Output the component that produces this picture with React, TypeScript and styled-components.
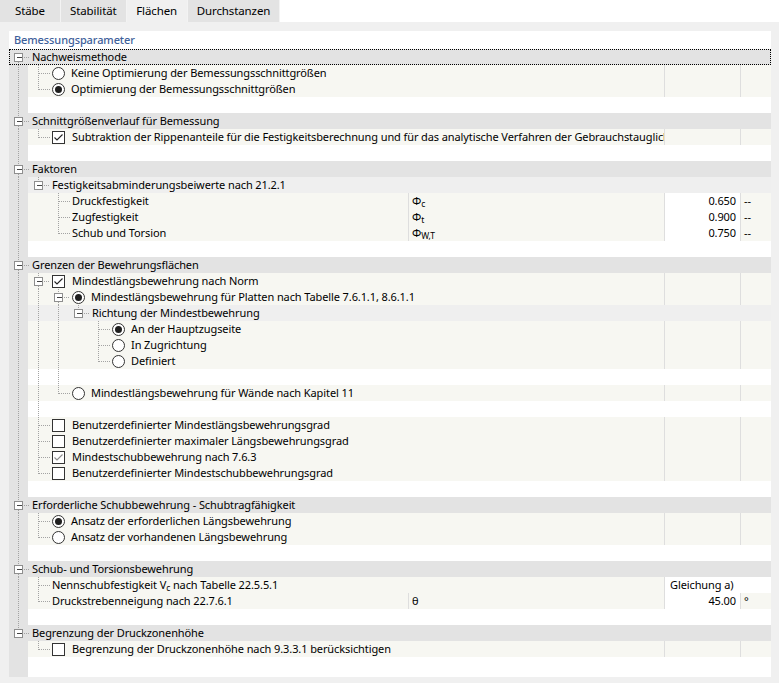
import * as React from 'react';
import styled, { createGlobalStyle } from 'styled-components';

type Kind = 'group' | 'sub' | 'item' | 'blank';

interface RowData {
    kind: Kind;
    level: number;
    label?: React.ReactNode;
    control?: 'radio' | 'check';
    on?: boolean;
    disabled?: boolean;
    pass?: number[];
    leaf?: 'tee' | 'end';
    exp?: { above: boolean; below: boolean };
    symbol?: React.ReactNode;
    value?: string;
    unit?: string;
    wide?: string;
    focused?: boolean;
    tall?: boolean;
}

const RAIL = '#e3e3e3';
const SEP = '#dedede';
const BODY: Record<Kind, string> = {
    group: RAIL,
    sub: '#efefef',
    item: '#f7f7f2',
    blank: '#ffffff',
};

const GlobalStyle = createGlobalStyle`
    html, body {
        margin: 0;
        padding: 0;
        background: #ffffff;
    }
    body {
        font-family: "Noto Sans", "Open Sans", sans-serif;
        font-size: 11px;
        letter-spacing: -0.1px;
        color: #000000;
    }
`;

const Page = styled.div`
    width: 779px;
    height: 683px;
    display: flex;
    flex-direction: column;
    overflow: hidden;
`;

const TabBar = styled.div`
    display: flex;
    align-self: flex-start;
    height: 22px;
    background: #e3e3e3;
`;

const Tab = styled.div<{ $active?: boolean }>`
    min-width: 61px;
    box-sizing: border-box;
    padding: 0 9px;
    line-height: 22px;
    text-align: center;
    font-size: 11.5px;
    color: #000000;
    background: ${({ $active }) => ($active ? '#f0f0f0' : 'transparent')};
    border-right: 1px solid #f3f3f3;
`;

const Panel = styled.div`
    flex: 1;
    background: #f0f0f0;
    padding: 9px 8px 6px 9px;
    display: flex;
`;

const Sheet = styled.div`
    flex: 1;
    background: #ffffff;
    display: flex;
    flex-direction: column;
`;

const TitleRow = styled.div`
    height: 18px;
    line-height: 18px;
    padding-left: 5px;
    color: #3d609a;
    font-weight: 500;
`;

const Row = styled.div<{ $kind: Kind; $indent: number; $focused?: boolean; $tall?: boolean }>`
    display: grid;
    grid-template-columns: ${({ $indent }) => $indent}px 1fr 256px 76px 31px;
    height: ${({ $tall }) => ($tall ? 20 : 16)}px;
    line-height: 16px;
    background: ${({ $kind }) =>
        $kind === 'group' ? RAIL : `linear-gradient(to right, ${RAIL} 19px, ${BODY[$kind]} 19px)`};
    outline: ${({ $focused }) => ($focused ? '1px dotted #000' : 'none')};
    outline-offset: -1px;
`;

const GuideCell = styled.div`
    height: 16px;
    svg {
        display: block;
    }
`;

const LabelCell = styled.div<{ $span: number }>`
    grid-column: span ${({ $span }) => $span};
    display: flex;
    align-items: center;
    gap: 6px;
    min-width: 0;
    overflow: hidden;
    white-space: nowrap;
`;

const SymbolCell = styled.div`
    border-left: 1px solid ${SEP};
    padding-left: 3px;
    white-space: nowrap;
`;

const ValueCell = styled.div<{ $filled?: boolean; $span?: boolean }>`
    grid-column: span ${({ $span }) => ($span ? 2 : 1)};
    border-left: 1px solid ${SEP};
    background: ${({ $filled }) => ($filled ? '#ffffff' : 'transparent')};
    text-align: ${({ $span }) => ($span ? 'left' : 'right')};
    padding: ${({ $span }) => ($span ? '0 0 0 5px' : '0 4px 0 0')};
    white-space: nowrap;
    overflow: hidden;
`;

const UnitCell = styled.div`
    border-left: 1px solid ${SEP};
    padding-left: 3px;
`;

const Sub = styled.sub`
    font-size: 8.5px;
    line-height: 0;
    vertical-align: -2px;
`;

const RadioMark = styled.span<{ $on?: boolean }>`
    flex: none;
    width: 13px;
    height: 13px;
    box-sizing: border-box;
    border: 1px solid #333333;
    border-radius: 50%;
    background: #ffffff;
    display: flex;
    align-items: center;
    justify-content: center;

    &::after {
        content: '';
        width: 7px;
        height: 7px;
        border-radius: 50%;
        background: ${({ $on }) => ($on ? '#1f1f1f' : 'transparent')};
    }
`;

const CheckMark = styled.span`
    flex: none;
    width: 13px;
    height: 13px;
    box-sizing: border-box;
    border: 1px solid #333333;
    background: #ffffff;
    margin-right: 1px;

    svg {
        display: block;
    }
`;

const Radio: React.FC<{ on?: boolean }> = ({ on }) => <RadioMark $on={on} />;

const Check: React.FC<{ on?: boolean; disabled?: boolean }> = ({ on, disabled }) => (
    <CheckMark>
        {on && (
            <svg width="11" height="11" viewBox="0 0 11 11">
                <path
                    d="M1.5 5.5 L4 8 L9.5 2.5"
                    fill="none"
                    stroke={disabled ? '#8c8c8c' : '#222222'}
                    strokeWidth="1.1"
                />
            </svg>
        )}
    </CheckMark>
);

const gx = (l: number) => 9.5 + 20 * l;
const indentOf = (level: number) => 23 + 20 * level;

const Guides: React.FC<{ row: RowData; width: number }> = ({ row, width }) => {
    const dot = { stroke: '#a3a3a3', strokeDasharray: '1 1', shapeRendering: 'crispEdges' as const };
    const parts: React.ReactNode[] = [];
    (row.pass || []).forEach((l) =>
        parts.push(<line key={`p${l}`} x1={gx(l)} y1={0} x2={gx(l)} y2={16} {...dot} />)
    );
    const x = gx(row.level);
    if (row.leaf) {
        parts.push(
            <line key="lv" x1={x} y1={0} x2={x} y2={row.leaf === 'end' ? 9 : 16} {...dot} />,
            <line key="lh" x1={x} y1={8.5} x2={width - 2} y2={8.5} {...dot} />
        );
    }
    if (row.exp) {
        if (row.exp.above) parts.push(<line key="ea" x1={x} y1={0} x2={x} y2={4} {...dot} />);
        if (row.exp.below) parts.push(<line key="eb" x1={x} y1={13} x2={x} y2={16} {...dot} />);
        parts.push(
            <line key="eh" x1={x + 5} y1={8.5} x2={width - 2} y2={8.5} {...dot} />,
            <rect
                key="box"
                x={x - 4}
                y={4.5}
                width={8}
                height={8}
                fill="#ffffff"
                stroke="#8e8e8e"
                shapeRendering="crispEdges"
            />,
            <line
                key="minus"
                x1={x - 2}
                y1={8.5}
                x2={x + 3}
                y2={8.5}
                stroke="#444444"
                shapeRendering="crispEdges"
            />
        );
    }
    return (
        <svg width={width} height={16}>
            {parts}
        </svg>
    );
};

const group = (label: string, above: boolean, below: boolean, focused?: boolean): RowData => ({
    kind: 'group',
    level: 0,
    label,
    exp: { above, below },
    focused,
});

const blank = (pass: number[], tall?: boolean): RowData => ({
    kind: 'blank',
    level: Math.max(0, ...pass),
    pass,
    tall,
});

const ROWS: RowData[] = [
    group('Nachweismethode', false, true, true),
    { kind: 'item', level: 1, pass: [0], leaf: 'tee', control: 'radio', label: 'Keine Optimierung der Bemessungsschnittgrößen' },
    { kind: 'item', level: 1, pass: [0], leaf: 'end', control: 'radio', on: true, label: 'Optimierung der Bemessungsschnittgrößen' },
    blank([0]),
    group('Schnittgrößenverlauf für Bemessung', true, true),
    {
        kind: 'item',
        level: 1,
        pass: [0],
        leaf: 'end',
        control: 'check',
        on: true,
        label: 'Subtraktion der Rippenanteile für die Festigkeitsberechnung und für das analytische Verfahren der Gebrauchstauglichkeit',
    },
    blank([0]),
    group('Faktoren', true, true),
    { kind: 'sub', level: 1, pass: [0], exp: { above: true, below: false }, label: 'Festigkeitsabminderungsbeiwerte nach 21.2.1' },
    { kind: 'item', level: 2, pass: [0], leaf: 'tee', label: 'Druckfestigkeit', symbol: <>Φ<Sub>c</Sub></>, value: '0.650', unit: '--' },
    { kind: 'item', level: 2, pass: [0], leaf: 'tee', label: 'Zugfestigkeit', symbol: <>Φ<Sub>t</Sub></>, value: '0.900', unit: '--' },
    { kind: 'item', level: 2, pass: [0], leaf: 'end', label: 'Schub und Torsion', symbol: <>Φ<Sub>W,T</Sub></>, value: '0.750', unit: '--' },
    blank([0]),
    group('Grenzen der Bewehrungsflächen', true, true),
    { kind: 'item', level: 1, pass: [0], exp: { above: true, below: true }, control: 'check', on: true, label: 'Mindestlängsbewehrung nach Norm' },
    { kind: 'item', level: 2, pass: [0, 1], exp: { above: true, below: true }, control: 'radio', on: true, label: 'Mindestlängsbewehrung für Platten nach Tabelle 7.6.1.1, 8.6.1.1' },
    { kind: 'sub', level: 3, pass: [0, 1, 2], exp: { above: true, below: false }, label: 'Richtung der Mindestbewehrung' },
    { kind: 'item', level: 4, pass: [0, 1, 2], leaf: 'tee', control: 'radio', on: true, label: 'An der Hauptzugseite' },
    { kind: 'item', level: 4, pass: [0, 1, 2], leaf: 'tee', control: 'radio', label: 'In Zugrichtung' },
    { kind: 'item', level: 4, pass: [0, 1, 2], leaf: 'end', control: 'radio', label: 'Definiert' },
    blank([0, 1, 2]),
    { kind: 'item', level: 2, pass: [0, 1], leaf: 'end', control: 'radio', label: 'Mindestlängsbewehrung für Wände nach Kapitel 11' },
    blank([0, 1]),
    { kind: 'item', level: 1, pass: [0], leaf: 'tee', control: 'check', label: 'Benutzerdefinierter Mindestlängsbewehrungsgrad' },
    { kind: 'item', level: 1, pass: [0], leaf: 'tee', control: 'check', label: 'Benutzerdefinierter maximaler Längsbewehrungsgrad' },
    { kind: 'item', level: 1, pass: [0], leaf: 'tee', control: 'check', on: true, disabled: true, label: 'Mindestschubbewehrung nach 7.6.3' },
    { kind: 'item', level: 1, pass: [0], leaf: 'end', control: 'check', label: 'Benutzerdefinierter Mindestschubbewehrungsgrad' },
    blank([0]),
    group('Erforderliche Schubbewehrung - Schubtragfähigkeit', true, true),
    { kind: 'item', level: 1, pass: [0], leaf: 'tee', control: 'radio', on: true, label: 'Ansatz der erforderlichen Längsbewehrung' },
    { kind: 'item', level: 1, pass: [0], leaf: 'end', control: 'radio', label: 'Ansatz der vorhandenen Längsbewehrung' },
    blank([0]),
    group('Schub- und Torsionsbewehrung', true, true),
    { kind: 'item', level: 1, pass: [0], leaf: 'tee', label: <>Nennschubfestigkeit V<Sub>c</Sub> nach Tabelle 22.5.5.1</>, wide: 'Gleichung a)' },
    { kind: 'item', level: 1, pass: [0], leaf: 'end', label: 'Druckstrebenneigung nach 22.7.6.1', symbol: 'θ', value: '45.00', unit: '°' },
    blank([0]),
    group('Begrenzung der Druckzonenhöhe', true, false),
    { kind: 'item', level: 1, leaf: 'end', control: 'check', label: 'Begrenzung der Druckzonenhöhe nach 9.3.3.1 berücksichtigen' },
    blank([], true),
];

const TreeRow: React.FC<{ row: RowData }> = ({ row }) => {
    const indent = indentOf(row.level);
    const isItem = row.kind === 'item';
    const hasGuides = row.kind !== 'blank' || (row.pass && row.pass.length > 0);
    return (
        <Row $kind={row.kind} $indent={indent} $focused={row.focused} $tall={row.tall}>
            <GuideCell>{hasGuides && <Guides row={row} width={indent} />}</GuideCell>
            {row.kind !== 'blank' && (
                <LabelCell $span={isItem && row.symbol ? 1 : isItem ? 2 : 4}>
                    {row.control === 'radio' && <Radio on={row.on} />}
                    {row.control === 'check' && <Check on={row.on} disabled={row.disabled} />}
                    <span>{row.label}</span>
                </LabelCell>
            )}
            {isItem && row.symbol && <SymbolCell>{row.symbol}</SymbolCell>}
            {isItem &&
                (row.wide ? (
                    <ValueCell $filled $span>
                        {row.wide}
                    </ValueCell>
                ) : (
                    <>
                        <ValueCell $filled={!!row.value}>{row.value}</ValueCell>
                        <UnitCell>{row.unit}</UnitCell>
                    </>
                ))}
        </Row>
    );
};

const App: React.FC = () => (
    <Page>
        <GlobalStyle />
        <TabBar>
            <Tab>Stäbe</Tab>
            <Tab>Stabilität</Tab>
            <Tab $active>Flächen</Tab>
            <Tab>Durchstanzen</Tab>
        </TabBar>
        <Panel>
            <Sheet>
                <TitleRow>Bemessungsparameter</TitleRow>
                {ROWS.map((row, i) => (
                    <TreeRow row={row} key={i} />
                ))}
            </Sheet>
        </Panel>
    </Page>
);

export default App;
